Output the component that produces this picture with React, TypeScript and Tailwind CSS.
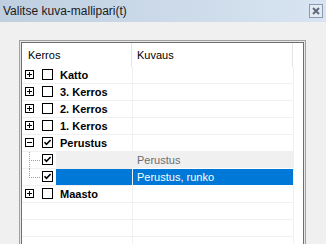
import React from "react";

const font = { fontFamily: '"Liberation Sans", Arial, sans-serif' };

function PlusBox({ minus }: { minus?: boolean }) {
  return (
    <svg width="9" height="9" viewBox="0 0 9 9" className="block">
      <rect x="0.5" y="0.5" width="8" height="8" fill="white" stroke="#000" />
      <line x1="2" y1="4.5" x2="7" y2="4.5" stroke="#000" />
      {!minus && <line x1="4.5" y1="2" x2="4.5" y2="7" stroke="#000" />}
    </svg>
  );
}

function Check({ checked }: { checked?: boolean }) {
  return (
    <svg width="11" height="11" viewBox="0 0 11 11" className="block">
      <rect x="0.5" y="0.5" width="10" height="10" fill="white" stroke="#000" />
      {checked && (
        <path d="M2.5 5.2 L4.5 7.3 L8.6 3" fill="none" stroke="#000" strokeWidth="1.6" />
      )}
    </svg>
  );
}

type Row =
  | { kind: "parent"; label: string; expanded?: boolean; checked?: boolean }
  | { kind: "child"; desc: string; last?: boolean; selected?: boolean }
  | { kind: "empty" };

const rows: Row[] = [
  { kind: "parent", label: "Katto" },
  { kind: "parent", label: "3. Kerros" },
  { kind: "parent", label: "2. Kerros" },
  { kind: "parent", label: "1. Kerros" },
  { kind: "parent", label: "Perustus", expanded: true, checked: true },
  { kind: "child", desc: "Perustus" },
  { kind: "child", desc: "Perustus, runko", last: true, selected: true },
  { kind: "parent", label: "Maasto" },
  { kind: "empty" },
  { kind: "empty" },
  { kind: "empty" },
];

function RowView({ row }: { row: Row }) {
  if (row.kind === "empty") {
    return (
      <div className="flex h-[17px]">
        <div className="w-[111px] h-[17px] border-r border-b border-[#f0f0f0]" />
        <div className="w-[161px] h-[17px] border-r border-b border-[#f0f0f0]" />
      </div>
    );
  }
  if (row.kind === "parent") {
    return (
      <div className="flex h-[17px]">
        <div className="w-[111px] h-[17px] border-r border-b border-[#f0f0f0] flex items-center">
          <div className="ml-[3px] mt-[-1px]">
            <PlusBox minus={row.expanded} />
          </div>
          <div className="ml-[8px] mt-[-1px]">
            <Check checked={row.checked} />
          </div>
          <span className="ml-[7px] text-[11px] font-bold text-black leading-none">{row.label}</span>
        </div>
        <div className="w-[161px] h-[17px] border-r border-b border-[#f0f0f0]" />
      </div>
    );
  }
  const bg = row.selected ? "bg-[#0078d7]" : "bg-[#f0f0f0]";
  const tc = row.selected ? "text-white" : "text-[#6d6d6d]";
  return (
    <div className="flex h-[17px]">
      <div className="w-[111px] h-[17px] border-r border-b border-[#f0f0f0] flex relative">
        <div className="w-[34px] h-[16px] relative flex items-center">
          <div
            className="absolute left-[7px] top-0 w-0 border-l border-dotted border-[#a0a0a0]"
            style={{ height: row.last ? 9 : 17 }}
          />
          <div className="absolute left-[7px] top-[8px] w-[11px] h-0 border-t border-dotted border-[#a0a0a0]" />
          <div className="ml-[20px] mt-[-1px] relative">
            <Check checked />
          </div>
        </div>
        <div className={`flex-1 h-[16px] ${bg}`} />
      </div>
      <div className={`w-[160px] h-[16px] ${bg} flex items-center`}>
        <span className={`ml-[4px] text-[11px] leading-none ${tc}`}>{row.desc}</span>
      </div>
      <div className="w-[1px] h-[17px] bg-[#f0f0f0]" />
    </div>
  );
}

export default function App() {
  return (
    <div className="w-[326px] h-[244px] overflow-hidden bg-[#f0f0f0] flex flex-col" style={font}>
      <div className="h-[22px] shrink-0 bg-gradient-to-r from-[#bfcfe0] to-[#d8e4f1] flex items-center justify-between">
        <span className="ml-[3px] text-[12px] text-[#1a1a1a] leading-none">Valitse kuva-mallipari(t)</span>
        <div className="mr-[3px] mt-[-1px] w-[14px] h-[14px] border border-[#8a99ad] bg-[#e4ebf3] flex items-center justify-center">
          <svg width="8" height="8" viewBox="0 0 8 8">
            <path d="M1 1 L7 7 M7 1 L1 7" stroke="#5f6b7c" strokeWidth="2" />
          </svg>
        </div>
      </div>
      <div className="pl-[19px] pt-[18px]">
        <div className="w-[287px] h-[300px] border border-[#a0a0a0] p-[1px] bg-[#e8e8e8]">
          <div className="w-full h-full border border-[#6e6e6e] bg-white">
            <div className="flex h-[24px]">
              <div className="w-[110px] h-[24px] border-r border-[#e5e5e5] flex items-center">
                <span className="ml-[6px] text-[11px] text-black leading-none">Kerros</span>
              </div>
              <div className="w-[161px] h-[24px] border-r border-[#e5e5e5] flex items-center">
                <span className="ml-[5px] text-[11px] text-black leading-none">Kuvaus</span>
              </div>
            </div>
            {rows.map((r, i) => (
              <RowView key={i} row={r} />
            ))}
          </div>
        </div>
      </div>
    </div>
  );
}
